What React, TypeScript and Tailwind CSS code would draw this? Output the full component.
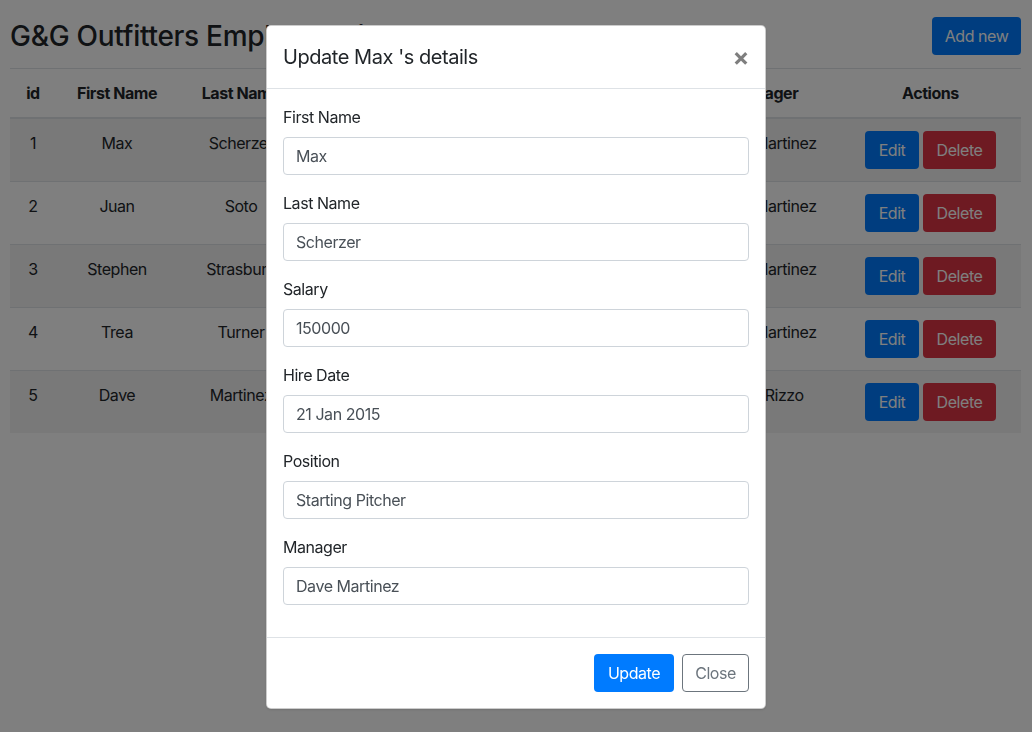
import React from "react";

interface Employee {
  id: number;
  firstName: string;
  lastName: string;
  salary: number;
  hireDate: string;
  position: string;
  manager: string;
}

const employees: Employee[] = [
  { id: 1, firstName: "Max", lastName: "Scherzer", salary: 150000, hireDate: "21 Jan 2015", position: "Starting Pitcher", manager: "Dave Martinez" },
  { id: 2, firstName: "Juan", lastName: "Soto", salary: 90000, hireDate: "15 May 2018", position: "Left Fielder", manager: "Dave Martinez" },
  { id: 3, firstName: "Stephen", lastName: "Strasburg", salary: 140000, hireDate: "08 Jun 2010", position: "Starting Pitcher", manager: "Dave Martinez" },
  { id: 4, firstName: "Trea", lastName: "Turner", salary: 100000, hireDate: "14 Aug 2015", position: "Shortstop", manager: "Dave Martinez" },
  { id: 5, firstName: "Dave", lastName: "Martinez", salary: 120000, hireDate: "30 Oct 2017", position: "Manager", manager: "Mike Rizzo" },
];

const fields = [
  { label: "First Name", value: "Max" },
  { label: "Last Name", value: "Scherzer" },
  { label: "Salary", value: "150000" },
  { label: "Hire Date", value: "21 Jan 2015" },
  { label: "Position", value: "Starting Pitcher" },
  { label: "Manager", value: "Dave Martinez" },
];

export default function App() {
  return (
    <div
      className="relative min-h-[732px] bg-white text-[#212529] tracking-[-0.028em]"
      style={{ fontFamily: "Inter, 'Noto Sans', sans-serif" }}
    >
      {/* Page content */}
      <div className="pl-[10px] pr-[11px]">
        <div className="flex items-center justify-between pt-[17px]">
          <h3 className="text-[28px] leading-[38px] font-medium tracking-[-0.01em]">G&amp;G Outfitters Employee List</h3>
          <button className="h-[38px] w-[89px] rounded-[4px] bg-[#007bff] text-white text-base">
            Add new
          </button>
        </div>

        <table className="mt-[13px] w-full table-fixed border-collapse text-center text-base">
          <colgroup>
            <col className="w-[46px]" />
            <col className="w-[122px]" />
            <col className="w-[126px]" />
            <col className="w-[110px]" />
            <col className="w-[130px]" />
            <col className="w-[146px]" />
            <col className="w-[150px]" />
            <col className="w-[181px]" />
          </colgroup>
          <thead>
            <tr className="border-t border-[#dee2e6] border-b-2">
              {["id", "First Name", "Last Name", "Salary", "Hire Date", "Position", "Manager", "Actions"].map((h) => (
                <th key={h} className="px-3 py-3 leading-6 font-bold align-bottom border-b-2 border-[#dee2e6]">
                  {h}
                </th>
              ))}
            </tr>
          </thead>
          <tbody>
            {employees.map((e, i) => (
              <tr key={e.id} className={`border-t border-[#dee2e6] ${i % 2 === 0 ? "bg-black/5" : ""}`}>
                <td className="p-3 leading-6 align-top">{e.id}</td>
                <td className="p-3 leading-6 align-top">{e.firstName}</td>
                <td className="p-3 leading-6 align-top">{e.lastName}</td>
                <td className="p-3 leading-6 align-top">{e.salary}</td>
                <td className="p-3 leading-6 align-top">{e.hireDate}</td>
                <td className="p-3 leading-6 align-top">{e.position}</td>
                <td className="p-3 leading-6 align-top">{e.manager}</td>
                <td className="p-3 leading-6 align-top">
                  <div className="flex justify-center gap-1">
                    <button className="h-[38px] w-[54px] rounded-[4px] bg-[#007bff] text-white">Edit</button>
                    <button className="h-[38px] w-[73px] rounded-[4px] bg-[#dc3545] text-white">Delete</button>
                  </div>
                </td>
              </tr>
            ))}
          </tbody>
        </table>
      </div>

      {/* Modal backdrop */}
      <div className="fixed inset-0 bg-black/50" />

      {/* Modal */}
      <div className="fixed inset-0 flex justify-center pt-[25px]">
        <div className="w-[500px] h-fit bg-white rounded-[5px] border border-black/20 shadow-sm">
          <div className="flex items-start justify-between p-4 border-b border-[#dee2e6]">
            <h5 className="text-xl leading-[30px] font-normal">Update Max 's details</h5>
            <button className="text-[25px] leading-[30px] font-bold text-black opacity-50">×</button>
          </div>

          <div className="p-4">
            {fields.map((f) => (
              <div key={f.label} className="mb-4">
                <label className="block mb-2 leading-6">{f.label}</label>
                <input
                  readOnly
                  value={f.value}
                  className="block w-full h-[38px] px-3 rounded-[4px] border border-[#ced4da] text-[#495057] text-base outline-none"
                />
              </div>
            ))}
          </div>

          <div className="flex justify-end items-center p-3 border-t border-[#dee2e6]">
            <button className="m-1 h-[38px] w-[80px] rounded-[4px] bg-[#007bff] text-white">Update</button>
            <button className="m-1 h-[38px] w-[67px] rounded-[4px] border border-[#6c757d] text-[#6c757d]">Close</button>
          </div>
        </div>
      </div>
    </div>
  );
}
